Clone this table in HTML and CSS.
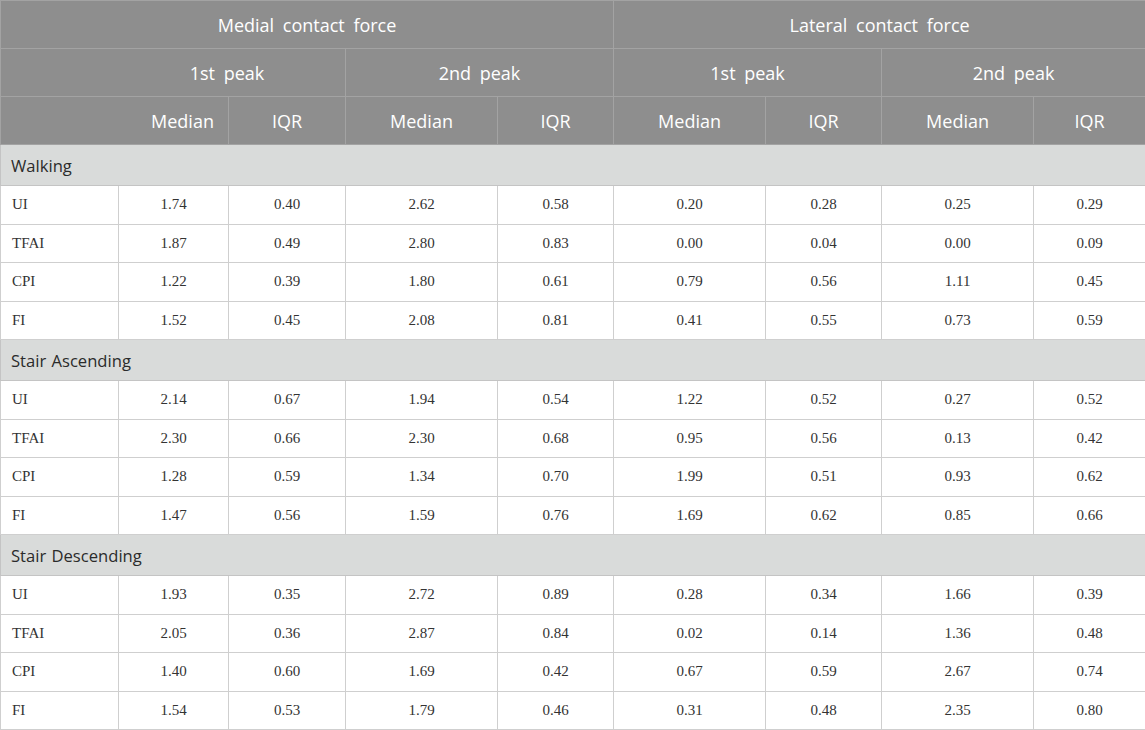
FILE: index.html
```html
<!DOCTYPE html>
<html>
<head>
<meta charset="utf-8">
<link rel="stylesheet" href="styles.css">
</head>
<body>
<table class="results">
  <colgroup>
    <col class="c-label">
    <col class="c-110">
    <col class="c-117">
    <col class="c-152">
    <col class="c-116">
    <col class="c-152">
    <col class="c-116">
    <col class="c-152">
    <col class="c-112">
  </colgroup>
  <thead>
    <tr class="h-row">
      <th colspan="5" class="h-top">Medial contact force</th>
      <th colspan="4" class="h-top">Lateral contact force</th>
    </tr>
    <tr class="h-row">
      <th class="h-stub"></th>
      <th colspan="2" class="h-first">1st peak</th>
      <th colspan="2">2nd peak</th>
      <th colspan="2">1st peak</th>
      <th colspan="2">2nd peak</th>
    </tr>
    <tr class="h-row">
      <th class="h-stub"></th>
      <th class="h-median-first">Median</th>
      <th>IQR</th>
      <th>Median</th>
      <th>IQR</th>
      <th>Median</th>
      <th>IQR</th>
      <th>Median</th>
      <th>IQR</th>
    </tr>
  </thead>
  <tbody>
    <tr class="group"><td colspan="9">Walking</td></tr>
    <tr class="data"><td>UI</td><td>1.74</td><td>0.40</td><td>2.62</td><td>0.58</td><td>0.20</td><td>0.28</td><td>0.25</td><td>0.29</td></tr>
    <tr class="data"><td>TFAI</td><td>1.87</td><td>0.49</td><td>2.80</td><td>0.83</td><td>0.00</td><td>0.04</td><td>0.00</td><td>0.09</td></tr>
    <tr class="data"><td>CPI</td><td>1.22</td><td>0.39</td><td>1.80</td><td>0.61</td><td>0.79</td><td>0.56</td><td>1.11</td><td>0.45</td></tr>
    <tr class="data"><td>FI</td><td>1.52</td><td>0.45</td><td>2.08</td><td>0.81</td><td>0.41</td><td>0.55</td><td>0.73</td><td>0.59</td></tr>
    <tr class="group"><td colspan="9">Stair Ascending</td></tr>
    <tr class="data"><td>UI</td><td>2.14</td><td>0.67</td><td>1.94</td><td>0.54</td><td>1.22</td><td>0.52</td><td>0.27</td><td>0.52</td></tr>
    <tr class="data"><td>TFAI</td><td>2.30</td><td>0.66</td><td>2.30</td><td>0.68</td><td>0.95</td><td>0.56</td><td>0.13</td><td>0.42</td></tr>
    <tr class="data"><td>CPI</td><td>1.28</td><td>0.59</td><td>1.34</td><td>0.70</td><td>1.99</td><td>0.51</td><td>0.93</td><td>0.62</td></tr>
    <tr class="data"><td>FI</td><td>1.47</td><td>0.56</td><td>1.59</td><td>0.76</td><td>1.69</td><td>0.62</td><td>0.85</td><td>0.66</td></tr>
    <tr class="group"><td colspan="9">Stair Descending</td></tr>
    <tr class="data"><td>UI</td><td>1.93</td><td>0.35</td><td>2.72</td><td>0.89</td><td>0.28</td><td>0.34</td><td>1.66</td><td>0.39</td></tr>
    <tr class="data"><td>TFAI</td><td>2.05</td><td>0.36</td><td>2.87</td><td>0.84</td><td>0.02</td><td>0.14</td><td>1.36</td><td>0.48</td></tr>
    <tr class="data"><td>CPI</td><td>1.40</td><td>0.60</td><td>1.69</td><td>0.42</td><td>0.67</td><td>0.59</td><td>2.67</td><td>0.74</td></tr>
    <tr class="data"><td>FI</td><td>1.54</td><td>0.53</td><td>1.79</td><td>0.46</td><td>0.31</td><td>0.48</td><td>2.35</td><td>0.80</td></tr>
  </tbody>
</table>
</body>
</html>
```

FILE: styles.css
```css
html, body {
  margin: 0;
  padding: 0;
  background: #ffffff;
}

.results {
  width: 1145px;
  border-collapse: collapse;
  table-layout: fixed;
  border: 1px solid #c9c9c9;
}

.c-label { width: 118px; }
.c-110 { width: 110px; }
.c-117 { width: 117px; }
.c-152 { width: 152px; }
.c-116 { width: 116px; }
.c-112 { width: 112px; }

.h-row th {
  height: 47px;
  padding: 0;
  background: #8e8e8e;
  color: #ffffff;
  font-family: "Open Sans", "Noto Sans", sans-serif;
  font-weight: 400;
  font-size: 18px;
  word-spacing: 4px;
  text-align: center;
  vertical-align: middle;
  border: 1px solid #a3a3a3;
}

.h-row th.h-stub {
  border-right-color: #8e8e8e;
}

.h-row th.h-first {
  padding-right: 10px;
}

.h-row th.h-median-first {
  padding-left: 18px;
}

.group td {
  height: 40px;
  padding: 0 0 0 10px;
  background: #d9dbda;
  color: #2b2b2b;
  font-family: "Open Sans", "Noto Sans", sans-serif;
  font-size: 16.6px;
  word-spacing: 1px;
  vertical-align: middle;
  border: 1px solid #c4c4c4;
}

.data td {
  height: 37.5px;
  padding: 0;
  font-family: "Liberation Serif", "Times New Roman", serif;
  font-size: 15px;
  color: #333333;
  text-align: center;
  vertical-align: middle;
  border: 1px solid #cfcfcf;
}

.data td:first-child {
  text-align: left;
  padding-left: 11px;
}
```
